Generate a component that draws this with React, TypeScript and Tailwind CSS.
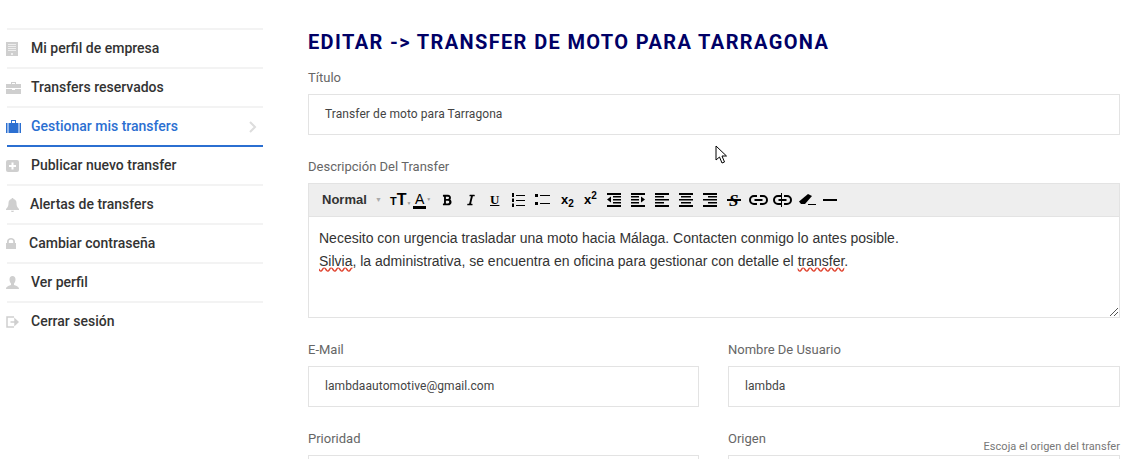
import { ReactNode } from 'react';
import { FaBold, FaItalic } from 'react-icons/fa';

const Lines = ({ rows }: { rows: [number, number][] }) => (
  <svg width="14" height="14" viewBox="0 0 14 14" fill="#000">
    {rows.map(([x, w], i) => (
      <rect key={i} x={x} y={i * 3} width={w} height={i === 0 || i === 4 ? 2 : 1.5} />
    ))}
  </svg>
);

const menuIcons: Record<string, ReactNode> = {
  building: (
    <svg width="12" height="14" viewBox="0 0 12 14" fill="#cfcfcf">
      <path d="M0 0h12v14H0z" />
      <path d="M2 2h8v1H2zM2 4h8v1H2zM2 6h8v1H2zM2 8h8v1H2zM5 11h2v2H5z" fill="#eee" />
    </svg>
  ),
  caseGrey: (
    <svg width="15" height="12" viewBox="0 0 15 12" fill="#cfcfcf">
      <path d="M5 2V0h5v2h5v4H0V2zM6 1v1h3V1zM0 7h6v1h3V7h6v5H0z" fillRule="evenodd" />
    </svg>
  ),
  caseBlue: (
    <svg width="15" height="13" viewBox="0 0 15 13" fill="#2b6fd1">
      <path d="M5 3V0h5v3zM6 1v2h3V1z" fillRule="evenodd" />
      <path d="M0 3h1.500v10H0zM2.500 3h10v10h-10zM13.500 3H15v10h-1.500z" />
    </svg>
  ),
  plus: (
    <svg width="13" height="12" viewBox="0 0 13 12">
      <rect width="13" height="12" rx="2" fill="#cfcfcf" />
      <path d="M5.500 2.500h2V5H10v2H7.500v2.500h-2V7H3V5h2.500z" fill="#fff" />
    </svg>
  ),
  bell: (
    <svg width="13" height="14" viewBox="0 0 13 14" fill="#cfcfcf">
      <path d="M6.500 0c.6 0 1 .4 1 1 2 .4 3 2 3 4 0 3 .8 4.500 2.500 6v1H0v-1c1.700-1.500 2.500-3 2.500-6 0-2 1-3.600 3-4 0-.6.400-1 1-1zM5 12.800h3c0 .8-.7 1.200-1.500 1.200S5 13.600 5 12.800z" />
    </svg>
  ),
  lock: (
    <svg width="10" height="11" viewBox="0 0 10 11" fill="#cfcfcf">
      <path d="M1 5V3.500C1 1.400 2.800 0 5 0s4 1.400 4 3.500V5h1v6H0V5zm1.800 0h4.400V3.500C7.200 2.400 6.200 1.600 5 1.600s-2.200.8-2.200 1.900z" fillRule="evenodd" />
    </svg>
  ),
  user: (
    <svg width="13" height="13" viewBox="0 0 13 13" fill="#cfcfcf">
      <path d="M6.500 0C8.400 0 9.500 1.400 9.500 3.500S8.500 7 8 7.500V9c1.500.8 5 1 5 4H0c0-3 3.500-3.200 5-4V7.500C4.500 7 3.500 5.600 3.500 3.500S4.600 0 6.500 0z" />
    </svg>
  ),
  logout: (
    <svg width="13" height="12" viewBox="0 0 13 12" fill="none" stroke="#cfcfcf" strokeWidth="1.500">
      <path d="M8 1H1v10h7" />
      <path d="M4.500 6h5M9 3.200 12 6 9 8.800z" fill="#cfcfcf" />
    </svg>
  ),
};

const menu = [
  { label: 'Mi perfil de empresa', icon: 'building', w: 'w-[24px]' },
  { label: 'Transfers reservados', icon: 'caseGrey', w: 'w-[24px]' },
  { label: 'Gestionar mis transfers', icon: 'caseBlue', w: 'w-[24px]', active: true },
  { label: 'Publicar nuevo transfer', icon: 'plus', w: 'w-[24px]' },
  { label: 'Alertas de transfers', icon: 'bell', w: 'w-[23px]' },
  { label: 'Cambiar contraseña', icon: 'lock', w: 'w-[22px]' },
  { label: 'Ver perfil', icon: 'user', w: 'w-[24px]' },
  { label: 'Cerrar sesión', icon: 'logout', w: 'w-[24px]' },
];

function Field({ label, value, hint }: { label: string; value?: string; hint?: string }) {
  return (
    <div className="relative">
      <div className="h-[19px] text-[13px] leading-[19px] text-[#666]">{label}</div>
      {hint && (
        <div className="absolute right-0 top-[11px] text-[11px] leading-[14px] tracking-[0.03px] text-[#777]">{hint}</div>
      )}
      <div className="mt-[7px] flex h-[41px] items-center border border-[#e3e3e3] pb-[2px] pl-[16px] text-[12px] tracking-[0.08px] text-[#444]">
        {value}
      </div>
    </div>
  );
}

function Toolbar() {
  return (
    <div className="flex h-[34px] items-center border border-[#e3e3e3] bg-[#eeeeee] pl-[13px] text-black">
      <span className="w-[53px] font-['Liberation_Sans',sans-serif] text-[13px] font-bold text-[#333]">Normal</span>
      <span className="w-[15px] text-[7px] text-[#aaa]">▼</span>
      <span className="flex w-[23px] items-baseline font-['Liberation_Sans',sans-serif] font-bold leading-none">
        <span className="text-[11px]">T</span>
        <span className="text-[16px]">T</span>
        <span className="text-[5px] text-[#999]">▼</span>
      </span>
      <span className="flex w-[28px] items-center">
        <span className="border-b-[3px] border-black px-[2px] font-['Liberation_Sans',sans-serif] text-[14px] leading-[14px]">A</span>
        <span className="text-[5px] text-[#999]">▼</span>
      </span>
      <span className="w-[24px]"><FaBold size={12} /></span>
      <span className="w-[25px]"><FaItalic size={12} /></span>
      <span className="w-[21px] font-['Liberation_Serif',serif] text-[13px] font-bold underline">U</span>
      <span className="w-[24px]">
        <svg width="14" height="14" viewBox="0 0 14 14" fill="#000">
          <rect x="5" y="2" width="9" height="1" />
          <rect x="5" y="7" width="9" height="1" />
          <rect x="5" y="12" width="9" height="1" />
          <rect x="1" y="0" width="2" height="4" />
          <rect x="1" y="5.500" width="2" height="3.500" />
          <rect x="1" y="10.500" width="2" height="3.500" />
        </svg>
      </span>
      <span className="w-[26px]">
        <svg width="15" height="14" viewBox="0 0 15 14" fill="#000">
          <rect x="0" y="1" width="3" height="3" />
          <rect x="0" y="9" width="3" height="3" />
          <rect x="5" y="2" width="10" height="1" />
          <rect x="5" y="10" width="10" height="1" />
        </svg>
      </span>
      <span className="w-[23px] font-['Liberation_Sans',sans-serif] text-[13px] font-bold">
        x<sub className="text-[10px]">2</sub>
      </span>
      <span className="w-[23px] font-['Liberation_Sans',sans-serif] text-[13px] font-bold">
        x<sup className="text-[10px]">2</sup>
      </span>
      <span className="w-[24px]">
        <svg width="14" height="14" viewBox="0 0 14 14" fill="#000">
          <path d="M0 0h14v2H0zM0 12h14v2H0zM6 3h8v1.500H6zM6 6h8v1.500H6zM6 9h8v1.500H6zM4 3.500v6L0 6.500z" />
        </svg>
      </span>
      <span className="w-[24px]">
        <svg width="14" height="14" viewBox="0 0 14 14" fill="#000">
          <path d="M0 0h14v2H0zM0 12h14v2H0zM0 3h8v1.500H0zM0 6h8v1.500H0zM0 9h8v1.500H0zM10 3.500v6l4-3z" />
        </svg>
      </span>
      <span className="w-[24px]">
        <Lines rows={[[0, 14], [0, 9], [0, 14], [0, 9], [0, 14]]} />
      </span>
      <span className="w-[24px]">
        <Lines rows={[[0, 14], [2, 10], [0, 14], [2, 10], [0, 14]]} />
      </span>
      <span className="w-[24px]">
        <Lines rows={[[0, 14], [5, 9], [0, 14], [5, 9], [0, 14]]} />
      </span>
      <span className="relative w-[22px] pl-[2px] font-['Liberation_Serif',serif] text-[17px] font-bold italic leading-none">
        S<span className="absolute left-0 top-[7px] h-[2px] w-[14px] bg-black" />
      </span>
      <span className="w-[24px]">
        <svg width="19" height="10" viewBox="0 0 19 10" fill="none" stroke="#000" strokeWidth="2">
          <path d="M8 1H5a4 4 0 0 0 0 8h3M11 1h3a4 4 0 0 1 0 8h-3M5.500 5h8" />
        </svg>
      </span>
      <span className="w-[26px]">
        <svg width="19" height="14" viewBox="0 0 19 14" fill="none" stroke="#000" strokeWidth="2">
          <path d="M8 3H5a4 4 0 0 0 0 8h3M11 3h3a4 4 0 0 1 0 8h-3M5.500 7h8" />
          <path d="M8.500 0v14" strokeWidth="1" />
        </svg>
      </span>
      <span className="w-[24px]">
        <svg width="17" height="12" viewBox="0 0 17 12" fill="#000">
          <path d="M9 0 13 2 6 10H2L0 7.500z" />
          <rect x="9" y="10" width="8" height="1" />
        </svg>
      </span>
      <span className="h-[2px] w-[14px] bg-black" />
    </div>
  );
}

export default function App() {
  return (
    <div className="relative flex h-[459px] w-[1127px] overflow-hidden bg-white pl-[7px] pt-[28px] font-['Roboto',sans-serif]">
      <div className="w-[256px] shrink-0">
        {menu.map(item => (
          <div
            key={item.label}
            className={`flex h-[39px] items-center border-t-2 border-[#f3f3f3] text-[14px] font-medium ${item.active ? 'text-[#2b6fd1]' : 'text-[#333]'} ${item.label === 'Publicar nuevo transfer' ? 'border-t-[#2b6fd1]' : ''}`}
          >
            <span className={`-ml-[1px] flex ${item.w} shrink-0 justify-start`}>{menuIcons[item.icon]}</span>
            <span className="ml-[1px] whitespace-nowrap">{item.label}</span>
            {item.active && (
              <svg className="ml-auto mr-[6px]" width="8" height="12" viewBox="0 0 8 12" fill="none" stroke="#ddd" strokeWidth="2">
                <path d="M1 1l5 5-5 5" />
              </svg>
            )}
          </div>
        ))}
      </div>

      <div className="ml-[45px] w-[812px] shrink-0 -mt-[28px] pt-[30px]">
        <h1 className="text-[20px] font-bold leading-[24px] tracking-[1.37px] text-[#000066]">
          EDITAR -&gt; TRANSFER DE MOTO PARA TARRAGONA
        </h1>
        <div className="mt-[14px]">
          <Field label="Título" value="Transfer de moto para Tarragona" />
        </div>
        <div className="mt-[22px] h-[19px] text-[13px] leading-[19px] text-[#666]">Descripción Del Transfer</div>
        <div className="mt-[7px]">
          <Toolbar />
          <div className="relative h-[101px] border border-t-0 border-[#e3e3e3] px-[10px] pt-[10px] font-['Liberation_Sans',sans-serif] text-[14px] leading-[23px] text-[#333]">
            <div>Necesito con urgencia trasladar una moto hacia Málaga. Contacten conmigo lo antes posible.</div>
            <div>
              <span className="underline decoration-[#e0432f] decoration-wavy">Silvia</span>, la administrativa, se encuentra en oficina para gestionar con detalle el{' '}
              <span className="underline decoration-[#e0432f] decoration-wavy">transfer</span>.
            </div>
            <svg className="absolute bottom-0 right-0" width="10" height="10" viewBox="0 0 10 10" stroke="#555" fill="none">
              <path d="M1 9 9 1M5 9l4-4" />
            </svg>
          </div>
        </div>
        <div className="mt-[22px] grid grid-cols-[391px_392px] gap-x-[29px]">
          <Field label="E-Mail" value="lambdaautomotive@gmail.com" />
          <Field label="Nombre De Usuario" value="lambda" />
        </div>
        <div className="mt-[22px] grid grid-cols-[391px_392px] gap-x-[29px]">
          <Field label="Prioridad" />
          <Field label="Origen" hint="Escoja el origen del transfer" />
        </div>
      </div>

      <svg className="absolute left-[715px] top-[145px]" width="13" height="19" viewBox="0 0 13 19" fill="#fff" stroke="#000" strokeWidth="1">
        <path d="M1 1v14l3.500-3 2.500 6 2.500-1-2.500-6h4.500z" />
      </svg>
    </div>
  );
}
